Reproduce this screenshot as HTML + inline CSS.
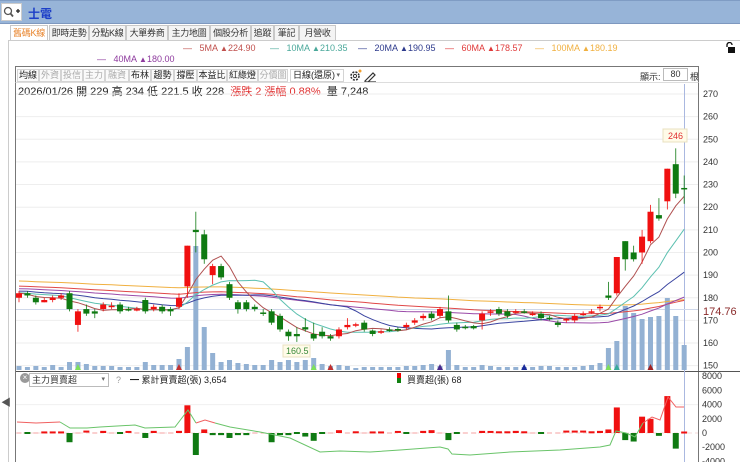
<!DOCTYPE html>
<html><head><meta charset="utf-8">
<style>
*{margin:0;padding:0;box-sizing:border-box}
body{width:740px;height:462px;overflow:hidden;background:#fff;font-family:"Liberation Sans","Noto Sans CJK TC",sans-serif;font-size:11px;color:#333;position:relative}
.abs{position:absolute;white-space:nowrap}
#top{position:absolute;left:0;top:0;width:740px;height:24px;background:#97b4d8;border-top:1px solid #7f9cc4;border-bottom:1px solid #7e98bf}
.tab{position:absolute;top:25px;height:16px;border:1px solid #c8c8c8;border-bottom:none;background:#f4f4f4;font-size:9px;line-height:14px;text-align:center;color:#333;white-space:nowrap;overflow:hidden;letter-spacing:-0.3px}
.tb{position:absolute;top:69px;height:13px;border:1px solid #d4d4d4;background:#fafafa;font-size:9px;line-height:11px;text-align:center;color:#222;white-space:nowrap;overflow:hidden}
.tb.g{color:#aaa}
</style></head><body>
<div id="top"></div>
<div class="abs" style="left:1px;top:3px;width:21px;height:18px;background:#fff;border:1px solid #ccc"></div>
<svg class="abs" style="left:3px;top:6px" width="18" height="13"><circle cx="5" cy="5" r="3.5" fill="none" stroke="#555" stroke-width="1.3"/><line x1="7.5" y1="7.5" x2="10" y2="10.5" stroke="#555" stroke-width="1.8"/><path d="M13 5h4M15 3v4" stroke="#222" stroke-width="1.3"/></svg>
<div class="abs" style="left:28px;top:5px;font-size:12px;font-weight:bold;color:#1d3fc8">士電</div>

<div class="tab" style="left:10px;width:38px;background:#fff;color:#e8832a">舊碼K線</div>
<div class="tab" style="left:49px;width:40px">即時走勢</div>
<div class="tab" style="left:89px;width:37px">分點K線</div>
<div class="tab" style="left:126px;width:42px">大單券商</div>
<div class="tab" style="left:168px;width:42px">主力地圖</div>
<div class="tab" style="left:210px;width:41px">個股分析</div>
<div class="tab" style="left:251px;width:23px">追蹤</div>
<div class="tab" style="left:274px;width:25px">筆記</div>
<div class="tab" style="left:299px;width:37px">月營收</div>
<div class="abs" style="left:8px;top:40px;width:732px;height:422px;border-left:1px solid #ccc;border-top:1px solid #ccc"></div>

<div class="abs" style="top:43px;left:183px;font-size:9px;color:#c0504d">—&nbsp;&nbsp; 5MA <span style="font-size:8px">▲</span>224.90</div>
<div class="abs" style="top:43px;left:270px;font-size:9px;color:#4aa89a">—&nbsp;&nbsp; 10MA <span style="font-size:8px">▲</span>210.35</div>
<div class="abs" style="top:43px;left:358px;font-size:9px;color:#2d3a8c">—&nbsp;&nbsp; 20MA <span style="font-size:8px">▲</span>190.95</div>
<div class="abs" style="top:43px;left:445px;font-size:9px;color:#e03a3a">—&nbsp;&nbsp; 60MA <span style="font-size:8px">▲</span>178.57</div>
<div class="abs" style="top:43px;left:535px;font-size:9px;color:#f0b040">—&nbsp;&nbsp; 100MA <span style="font-size:8px">▲</span>180.19</div>
<div class="abs" style="top:54px;left:97px;font-size:9px;color:#8e3a9e">—&nbsp;&nbsp; 40MA <span style="font-size:8px">▲</span>180.00</div>
<svg class="abs" style="left:724px;top:42px" width="12" height="12"><path d="M3 5V3a2.5 2.5 0 0 1 5 0" fill="none" stroke="#111" stroke-width="1.3"/><rect x="4" y="5" width="7" height="6" fill="#111"/></svg>

<div class="tb" style="left:17px;width:22px">均線</div>
<div class="tb g" style="left:39px;width:22px">外資</div>
<div class="tb g" style="left:61px;width:22px">投信</div>
<div class="tb g" style="left:83px;width:22px">主力</div>
<div class="tb g" style="left:105px;width:24px">融資</div>
<div class="tb" style="left:129px;width:22px">布林</div>
<div class="tb" style="left:151px;width:23px">趨勢</div>
<div class="tb" style="left:174px;width:23px">撐壓</div>
<div class="tb" style="left:197px;width:30px">本益比</div>
<div class="tb" style="left:227px;width:31px">紅綠燈</div>
<div class="tb g" style="left:258px;width:30px">分價圖</div>
<div class="tb" style="left:290px;width:54px;background:#fff;text-align:left;padding-left:2px">日線(還原)<span style="position:absolute;right:3px;font-size:7px;color:#666">▾</span></div>
<svg class="abs" style="left:348px;top:68px" width="30" height="15"><circle cx="7" cy="8" r="4" fill="none" stroke="#333" stroke-width="1.6" stroke-dasharray="2 1.2"/><circle cx="7" cy="8" r="1.6" fill="none" stroke="#333"/><circle cx="12" cy="3" r="1.5" fill="#f0a030"/><path d="M17 13l8-8 2 2-8 8h-2zM17 14h11" fill="none" stroke="#333" stroke-width="1.2"/></svg>
<div class="abs" style="left:640px;top:70px;font-size:9px">顯示:</div>
<div class="abs" style="left:663px;top:68px;width:25px;height:13px;border:1px solid #bbb;font-size:9px;text-align:center;line-height:11px">80</div>
<div class="abs" style="left:690px;top:70px;font-size:9px">根</div>
<div class="abs" style="left:18px;top:83px;font-size:11px;color:#222">2026/01/26 開 229 高 234 低 221.5 收 228 &nbsp;<span style="color:#e03030">漲跌 2 漲幅 0.88%</span> &nbsp;量 7,248</div>

<svg id="ch" class="abs" style="left:0;top:0" width="740" height="462"></svg>

<div class="abs" style="left:20px;top:373px;width:10px;height:10px;border-radius:50%;background:#999;color:#fff;font-size:8px;line-height:10px;text-align:center">×</div>
<div class="abs" style="left:29px;top:373px;width:80px;height:14px;border:1px solid #bbb;background:#fff;font-size:9px;line-height:12px;padding-left:2px">主力買賣超<span style="position:absolute;right:3px;font-size:7px;color:#666">▾</span></div>
<div class="abs" style="left:116px;top:375px;font-size:9px;color:#999">?</div>
<div class="abs" style="left:130px;top:373px;font-size:9px;color:#222">━ 累計買賣超(張) 3,654</div>
<div class="abs" style="left:397px;top:373px;width:4px;height:5px;background:#e00"></div>
<div class="abs" style="left:397px;top:378px;width:4px;height:5px;background:#118011"></div>
<div class="abs" style="left:407px;top:373px;font-size:9px;color:#222">買賣超(張) 68</div>
<div class="abs" style="left:1px;top:394px;font-size:10px;color:#555">◀</div>

<script>
var D=[[180,182,183,178],[182,181,183,180],[180,178,181,177],[178,179,180,178],[179,180,181,178],[180,181,182,179],[182,175,183,174],[168,174,175,165],[175,173,177,172],[174,173,175,171],[175,177,178,174],[176,176.5,178,175],[177,174,178,173],[175,174.5,176,174],[174.5,175,176,174],[179,174,180,173],[175,176,177,174],[176,174,177,173],[175,174,176,172],[176,180,182,175],[185,203,203,180],[210,209,218,200],[208,197,210,195],[190,194,195,186],[194,189,195,188],[186,180,187,179],[178,175,179,173],[178,175,179,174],[176,175,177,174],[173.5,173,175,172],[174,169,175,168],[172,166,173,165],[165,163,166,161],[164,163,167,160.5],[167,166,171,165],[164,162,169,161],[165,163,167,162],[163,162,164,161],[163,166,167,162],[167,168,171,166],[168,168.3,169,167],[169,166,170,165],[165.5,164,166,163],[164.8,165.2,166,164],[166,165.8,167,165],[166.2,166,167,165],[167,168,169,166],[169,170,171,168],[171,172,173,170],[173,171,174,170],[172,175,176,171],[174,170,181,169],[168,166,169,165],[167.2,167,168,166],[167.5,166.5,168,166],[170,173,174,166],[173.7,174,175,172],[175,173,176,172],[174,172,175,171],[173.8,174,175,173],[174,173.8,175,173],[172.8,173,174,172],[173,171,174,170],[171.2,171,172,170],[169,168,170,167],[170.3,170.6,171,169],[170,172,173,169],[172.8,173,174,172],[173.8,174,175,173],[175.5,176,177,174],[181,180,187,179],[182,198,198,181],[205,197,205,192],[200,197,203,196],[200,207,210,195],[205,218,221,204],[216.5,215,224,214],[222.6,237,237,219],[239,226,246,224],[228.5,228,234,221.5]];
var V=[4,3,4,3,5,3,8,8,6,4,4,4,3,3,3,8,5,5,5,11,23,124,43,17,8,10,7,6,5,5,10,8,10,8,10,12,6,4,5,4,2,3,3,3,3,3,4,4,5,6,4,20,5,3,3,5,4,3,3,3,3,3,4,4,3,3,3,4,5,7,22,29,64,57,51,53,54,72,54,25];
var B={6:-1300,8:200,10:300,12:-200,13:150,15:-700,16:300,19:300,20:3900,21:-3100,22:500,23:-300,24:-300,25:-700,26:-300,27:-300,30:-1300,31:-300,32:-300,33:-150,34:-500,35:-1100,36:-100,38:400,45:150,46:-150,48:300,49:400,51:-1000,52:-100,55:300,56:150,57:100,58:100,59:300,60:100,62:-80,65:200,66:200,67:200,68:100,69:300,70:500,71:3600,72:-1000,73:-1200,74:2300,75:2000,76:-400,77:5200,78:-2200,79:68,1:-100,3:80,4:80,5:80,40:100,42:80,43:80};
var s='',X=function(i){return 19+8.42*i},Y=function(p){return 94+(270-p)*2.264},Z=function(v){return 433-v*14.2/2000};
for(var p=150;p<=270;p+=10){var y=Y(p);s+='<line x1="16" x2="698" y1="'+y+'" y2="'+y+'" stroke="#eeeeee"/><text x="703" y="'+(y+3)+'" font-size="9" fill="#333">'+p+'</text>'}
[8000,6000,4000,2000,0,-2000,-4000].forEach(function(v){var y=Z(v);if(v==4000||v==0)s+='<line x1="16" x2="698" y1="'+y+'" y2="'+y+'" stroke="'+(v?'#f0f0f0':'#f4dada')+'" '+(v?'':'stroke-dasharray="4 3"')+'/>';s+='<text x="702" y="'+(y+3)+'" font-size="9" fill="#333">'+v+'</text>'});
s+='<rect x="15.5" y="66.5" width="683" height="400" fill="none" stroke="#777"/><line x1="16" x2="740" y1="371.5" y2="371.5" stroke="#555"/><line x1="15.5" x2="698.5" y1="82.5" y2="82.5" stroke="#ddd"/>';
s+='<line x1="684.5" x2="684.5" y1="84" y2="462" stroke="#aab8e0"/><line x1="16" x2="698" y1="309.5" y2="309.5" stroke="#cfd8ea"/>';
V.forEach(function(h,i){s+='<rect x="'+(X(i)-2.5)+'" y="'+(370-h)+'" width="5" height="'+h+'" fill="#93b1d3"/>'});
[[7,'#7de05a'],[19,'#c03030'],[35,'#7de05a'],[37,'#c03030'],[50,'#4a2a8c'],[60,'#1a2a9a'],[70,'#7de05a'],[71,'#3aaa9a'],[75,'#a02020']].forEach(function(m){var x=X(m[0]);s+='<path d="M'+(x-3)+' 370L'+x+' 364L'+(x+3)+' 370z" fill="'+m[1]+'"/>'});
var C=[];for(var k=0;k<100;k++)C.push(193-11*k/99+Math.sin(k)*1.5);D.forEach(function(d){C.push(d[1])});
function ma(n,col){var pts=[];for(var i=0;i<80;i++){var t=0;for(var j=0;j<n;j++)t+=C[100+i-j];pts.push(X(i).toFixed(1)+','+Y(t/n).toFixed(1))}s+='<polyline points="'+pts.join(' ')+'" fill="none" stroke="'+col+'" stroke-width="1"/>'}
ma(100,'#f0b040');ma(60,'#e04848');ma(40,'#9a4aa8');ma(20,'#3a44a0');ma(10,'#5cc0b0');ma(5,'#b05050');
D.forEach(function(d,i){var x=X(i),up=d[1]>=d[0],c=up?'#f01010':'#0f7a12';var t=Y(Math.max(d[0],d[1])),b=Y(Math.min(d[0],d[1]));if(b-t<1.5){b=t+1.5}s+='<line x1="'+x+'" x2="'+x+'" y1="'+Y(d[2])+'" y2="'+Y(d[3])+'" stroke="'+c+'" stroke-width="0.8"/><rect x="'+(x-3)+'" y="'+t+'" width="6" height="'+(b-t)+'" fill="'+c+'"/>'});
s+='<rect x="283" y="345" width="27" height="12" fill="#fffbe8" stroke="#e8e0c0"/><text x="286" y="354" font-size="9" fill="#3a8a3a">160.5</text>';
s+='<rect x="663" y="129" width="24" height="13" fill="#fffbe8" stroke="#e8e0c0"/><text x="668" y="139" font-size="9" fill="#e03030">246</text>';
s+='<text x="703" y="315" font-size="11" fill="#8a2a2a">174.76</text>';
for(var i=0;i<80;i++){var v=B[i];var x=X(i);if(v===undefined){s+='<line x1="'+(x-2.5)+'" x2="'+(x+2.5)+'" y1="433" y2="433" stroke="#f4a0a0"/>';continue}var c=v>=0?'#f01010':'#0f7a12';var y1=Z(Math.max(v,0)),y2=Z(Math.min(v,0));if(y2-y1<2){y1-=1;y2=y1+2}s+='<rect x="'+(x-3)+'" y="'+y1+'" width="6" height="'+(y2-y1)+'" fill="'+c+'"/>'}
function pl(p,c){s+='<polyline points="'+p+'" fill="none" stroke="'+c+'" stroke-width="1"/>'}
pl('17,422 36,423 60,422','#f06060');pl('60,422 70,428 87,428 100,427 135,425 145,428 175,427 188,410 196,423','#6ac46a');pl('196,423 205,420 215,423','#f06060');pl('215,423 230,427 260,432 290,438 320,452 340,451 370,452 400,450 440,447 448,449 452,454 470,455 510,452 560,450 600,447 610,445 616,431 626,433 635,437 643,423','#6ac46a');pl('643,423 652,417 660,420 668,397 676,407 684,407','#f06060');
document.getElementById('ch').innerHTML=s;
</script>
</body></html>
